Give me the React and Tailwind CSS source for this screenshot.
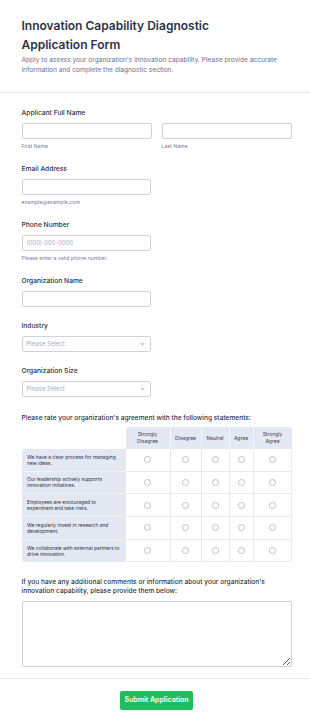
import React from "react";

const statements = [
  "We have a clear process for managing new ideas.",
  "Our leadership actively supports innovation initiatives.",
  "Employees are encouraged to experiment and take risks.",
  "We regularly invest in research and development.",
  "We collaborate with external partners to drive innovation.",
];

const cols = [
  ["Strongly", "Disagree"],
  ["Disagree"],
  ["Neutral"],
  ["Agree"],
  ["Strongly", "Agree"],
];

function Label({ children }) {
  return (
    <div className="text-[6.7px] leading-[10px] font-medium text-[#2c3345]">{children}</div>
  );
}

function Sub({ children }) {
  return (
    <div className="mt-[4.5px] text-[5.2px] leading-[7px] text-[#7a809b]">{children}</div>
  );
}

function Input({ placeholder, className = "w-[129px]" }) {
  return (
    <div
      className={`mt-[4.5px] h-[16px] ${className} rounded-[2px] border border-[#cdd2dd] bg-white flex items-center px-[4px] text-[6px] text-[#a7adc0]`}
    >
      {placeholder}
    </div>
  );
}

function Select() {
  return (
    <div className="mt-[4.5px] h-[16px] w-[129px] rounded-[2px] border border-[#cdd2dd] bg-white flex items-center justify-between pl-[4px] pr-[5px] text-[6px] text-[#a7adc0]">
      <span>Please Select</span>
      <svg width="5" height="4" viewBox="0 0 5 4" fill="none">
        <path d="M1 1.2 L2.5 2.7 L4 1.2" stroke="#6f7591" strokeWidth="0.8" />
      </svg>
    </div>
  );
}

export default function App() {
  return (
    <div className="min-h-screen bg-white font-['Inter',sans-serif] text-[#2c3345]">
      <header className="pl-[21.5px] pr-[18.5px] pt-[16px] pb-[16.5px] border-b border-[#e6e8ef]">
        <h1 className="text-[12px] leading-[19px] font-semibold text-[#2c3345]">
          Innovation Capability Diagnostic
          <br />
          Application Form
        </h1>
        <p className="mt-[2px] text-[6.6px] leading-[9.7px] text-[#6b7194]">
          Apply to assess your organization's innovation capability. Please provide accurate
          information and complete the diagnostic section.
        </p>
      </header>

      <main className="pl-[21.5px] pr-[18.5px] pt-[15.5px] pb-[11px]">
        <div>
          <Label>Applicant Full Name</Label>
          <div className="grid grid-cols-2 gap-[10px]">
            <div>
              <Input className="w-full" />
              <Sub>First Name</Sub>
            </div>
            <div>
              <Input className="w-full" />
              <Sub>Last Name</Sub>
            </div>
          </div>
        </div>

        <div className="mt-[14px]">
          <Label>Email Address</Label>
          <Input />
          <Sub>example@example.com</Sub>
        </div>

        <div className="mt-[14px]">
          <Label>Phone Number</Label>
          <Input placeholder="(000) 000-0000" />
          <Sub>Please enter a valid phone number.</Sub>
        </div>

        <div className="mt-[14px]">
          <Label>Organization Name</Label>
          <Input />
        </div>

        <div className="mt-[14.5px]">
          <Label>Industry</Label>
          <Select />
        </div>

        <div className="mt-[14.5px]">
          <Label>Organization Size</Label>
          <Select />
        </div>

        <div className="mt-[16px]">
          <div className="text-[6.6px] leading-[10px] font-medium text-[#2c3345]">
            Please rate your organization's agreement with the following statements:
          </div>
          <div className="mt-[4px] grid grid-cols-[104px_44px_31px_28px_24px_39px] w-[270px]">
            <div className="h-[22px]" />
            {cols.map((c, i) => (
              <div
                key={i}
                className={`h-[22px] bg-[#e4e8f3] flex flex-col items-center justify-center text-[5px] leading-[6.5px] text-[#3a4157] ${
                  i > 0 ? "border-l border-[#f3f5fa]" : ""
                } ${i === 0 ? "rounded-tl-[3px]" : ""} ${i === 4 ? "rounded-tr-[3px]" : ""}`}
              >
                {c.map((t) => (
                  <span key={t}>{t}</span>
                ))}
              </div>
            ))}
            {statements.map((s, r) => (
              <React.Fragment key={r}>
                <div
                  className={`h-[22.7px] bg-[#e4e8f3] flex items-center pl-[5.5px] pr-[3px] text-[4.9px] leading-[6px] text-[#2c3345] ${
                    r < statements.length - 1 ? "border-b border-[#f1f3f8]" : ""
                  } ${r === 0 ? "rounded-tl-[3px]" : ""} ${
                    r === statements.length - 1 ? "rounded-bl-[3px]" : ""
                  }`}
                >
                  {s}
                </div>
                {cols.map((c, i) => (
                  <div
                    key={i}
                    className={`h-[22.7px] bg-white flex items-center justify-center border-b border-[#e6e9f0] ${
                      i > 0 ? "border-l" : ""
                    } ${i === 4 ? "border-r" : ""} ${
                      i === 4 && r === statements.length - 1 ? "rounded-br-[3px]" : ""
                    }`}
                  >
                    <span className="w-[7px] h-[7px] rounded-full border-[0.8px] border-[#b9c0cf]" />
                  </div>
                ))}
              </React.Fragment>
            ))}
          </div>
        </div>

        <div className="mt-[15.5px]">
          <div className="text-[6.6px] leading-[9px] font-medium text-[#2c3345]">
            If you have any additional comments or information about your organization's
            innovation capability, please provide them below:
          </div>
          <textarea className="mt-[4.8px] block w-[270px] h-[66px] rounded-[2px] border border-[#cdd2dd] bg-white" />
        </div>
      </main>

      <footer className="border-t border-[#e6e8ef] pt-[12px] pl-[21.5px] pr-[18.5px] flex justify-center">
        <button className="h-[19.7px] w-[73.7px] rounded-[2px] bg-[#1fbe5d] text-white text-[7px] font-semibold">
          Submit Application
        </button>
      </footer>
    </div>
  );
}
